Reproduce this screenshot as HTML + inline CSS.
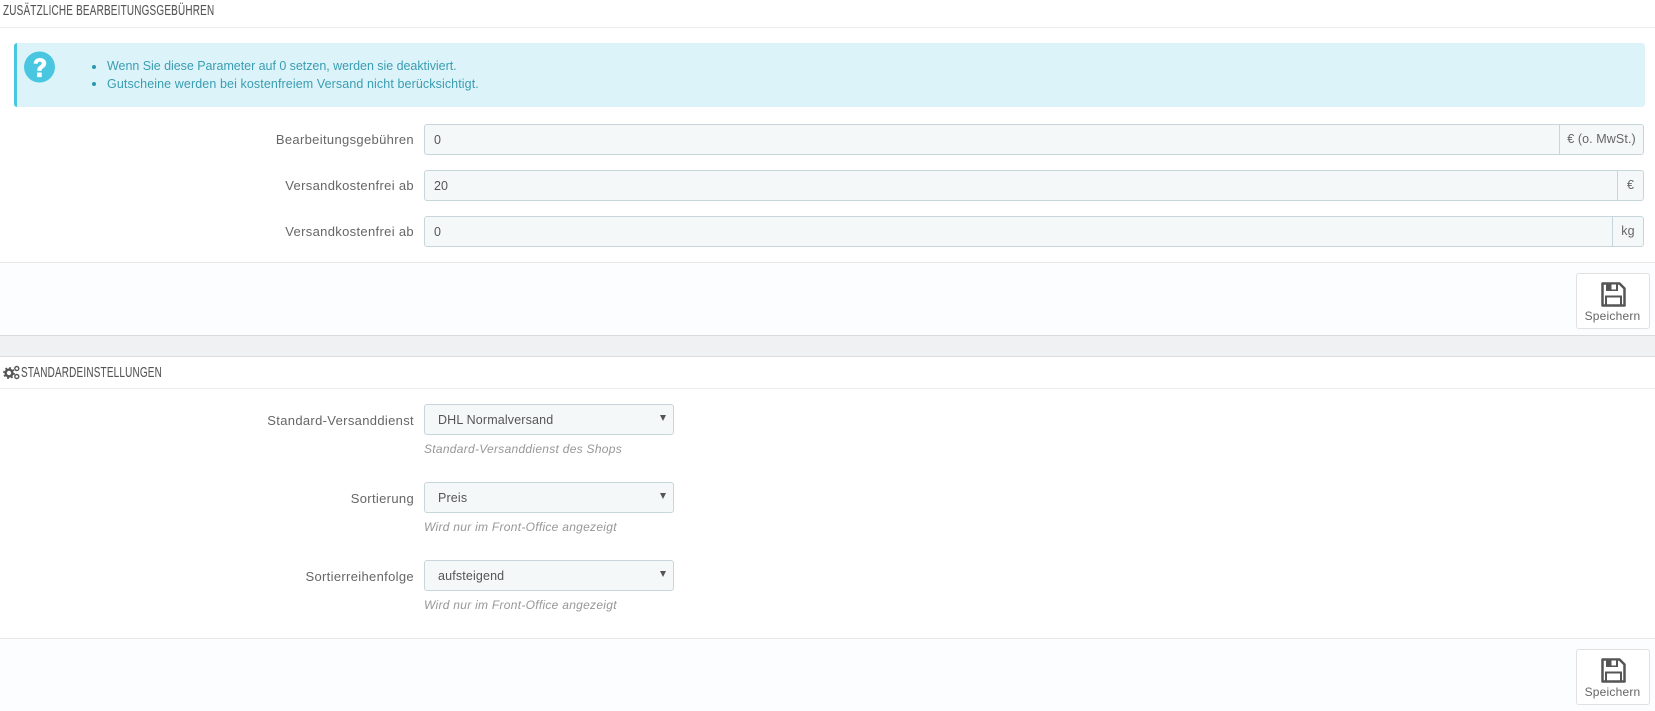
<!DOCTYPE html>
<html lang="de"><head><meta charset="utf-8"><title>Versand</title>
<style>
html,body{margin:0;padding:0;background:#fff}
body{position:relative;width:1655px;height:711px;overflow:hidden;font-family:"Liberation Sans",sans-serif;font-size:12.5px;color:#666}
div,span,svg,ul,li{position:absolute;box-sizing:border-box;white-space:nowrap}
.h{font-size:14.5px;color:#555;transform-origin:0 0;transform:scaleX(.685);letter-spacing:.3px;-webkit-text-stroke:.1px #555}
.line{left:0;width:1655px;height:1px;background:#eaedef}
.foot{left:0;width:1655px;background:#fcfdfe;border-top:1px solid #e6e8ea}
.lab{right:1241px;font-size:13px;color:#666;letter-spacing:.33px;text-align:right}
.inp{left:424px;width:1220px;height:31px;background:#f5f8f9;border:1px solid #c7d6db;border-radius:3px;color:#555}
.inp b{position:absolute;left:9px;top:8px;font-weight:400;font-size:12.5px}
.add{top:0;right:0;height:29px;border-left:1px solid #c7d6db;font-size:12.5px;letter-spacing:.1px;color:#666;line-height:29px;text-align:center}
.sel{left:424px;width:250px;height:31px;background:#f5f8f9;border:1px solid #c7d6db;border-radius:3px}
.sel b{position:absolute;left:13px;top:8px;font-weight:400;font-size:12.5px;color:#555;letter-spacing:.15px}
.sel i{position:absolute;left:235px;top:10px;width:0;height:0;border-left:3.500px solid transparent;border-right:3.500px solid transparent;border-top:6px solid #555}
.help{left:424px;font-style:italic;font-size:12px;color:#979797;letter-spacing:.28px}
.btn{left:1576px;width:74px;height:56px;background:#fff;border:1px solid #dfe1e3;border-radius:3px}
.btn svg{left:24px;top:8px}
.btn span{left:0;width:71px;top:35px;text-align:center;font-size:12px;color:#666;letter-spacing:.2px}
</style></head><body>
<div class="h" style="left:3px;top:3px">ZUSÄTZLICHE BEARBEITUNGSGEBÜHREN</div>
<div class="line" style="top:27px"></div>
<div style="left:14px;top:43px;width:1631px;height:64px;background:#dcf4f9;border-left:3px solid #4ac7e0;border-radius:3px"></div>
<svg style="left:24px;top:51px" width="32" height="32" viewBox="0 0 32 32"><circle cx="15.5" cy="16" r="15.5" fill="#4ac7e0"/><g transform="translate(15.500 16.500) scale(1.2) translate(-15.400 -15.800)"><path d="M10.500 12.500c.3-3 2.500-4.600 5.200-4.600 3 0 5.300 1.800 5.300 4.400 0 2.200-1.300 3.200-2.600 4.100-1 .7-1.300 1.100-1.300 2.200h-3.600c0-2.200.6-3.200 2-4.200 1-.7 1.800-1.200 1.800-2.100 0-.8-.7-1.400-1.600-1.400-1 0-1.700.6-2 1.900z" fill="#fff"/><rect x="13.400" y="20" width="3.900" height="3.800" rx=".4" fill="#fff"/></g></svg>
<span style="left:92px;top:65px;width:4px;height:4px;border-radius:50%;background:#2a97ad"></span>
<span style="left:92px;top:82px;width:4px;height:4px;border-radius:50%;background:#2a97ad"></span>
<span style="left:107px;top:59px;font-size:12.5px;color:#3a9db2;letter-spacing:-.04px">Wenn Sie diese Parameter auf 0 setzen, werden sie deaktiviert.</span>
<span style="left:107px;top:77px;font-size:12.5px;color:#3a9db2;letter-spacing:.1px">Gutscheine werden bei kostenfreiem Versand nicht berücksichtigt.</span>

<span class="lab" style="top:132px">Bearbeitungsgebühren</span>
<div class="inp" style="top:124px"><b>0</b><span class="add" style="width:84px">€ (o. MwSt.)</span></div>
<span class="lab" style="top:178px">Versandkostenfrei ab</span>
<div class="inp" style="top:170px"><b>20</b><span class="add" style="width:26px">€</span></div>
<span class="lab" style="top:224px">Versandkostenfrei ab</span>
<div class="inp" style="top:216px"><b>0</b><span class="add" style="width:31px">kg</span></div>

<div class="foot" style="top:262px;height:73px"></div>
<div class="btn" style="top:273px"><svg width="25" height="25" viewBox="0 0 25 25"><path d="M1.500 1.500H18.500L23.500 6.500V23.500H1.500Z" fill="none" stroke="#555" stroke-width="2.500" stroke-linejoin="round"/><path d="M5 1H17V9H5Z" fill="#555"/><rect x="10.500" y="2.500" width="4.500" height="5" fill="#fff"/><path d="M5 23V14.500H20V23" fill="none" stroke="#555" stroke-width="2"/></svg><span>Speichern</span></div>

<div style="left:0;top:335px;width:1655px;height:22px;background:#eff1f2;border-top:1px solid #d9dbdd;border-bottom:1px solid #dcdee0"></div>

<svg style="left:3px;top:365px" width="17" height="15" viewBox="0 0 17 15"><circle cx="6" cy="8" r="3.400" fill="none" stroke="#555" stroke-width="2.400"/><circle cx="6" cy="8" r="5.100" fill="none" stroke="#555" stroke-width="1.600" stroke-dasharray="1.900 2.100"/><circle cx="13.800" cy="3.500" r="2" fill="none" stroke="#555" stroke-width="1.400"/><circle cx="13.800" cy="11.500" r="2" fill="none" stroke="#555" stroke-width="1.400"/></svg>
<div class="h" style="left:21px;top:365px">STANDARDEINSTELLUNGEN</div>
<div class="line" style="top:388px"></div>

<span class="lab" style="top:413px">Standard-Versanddienst</span>
<div class="sel" style="top:404px"><b>DHL Normalversand</b><i></i></div>
<span class="help" style="top:442px">Standard-Versanddienst des Shops</span>

<span class="lab" style="top:491px">Sortierung</span>
<div class="sel" style="top:482px"><b>Preis</b><i></i></div>
<span class="help" style="top:520px">Wird nur im Front-Office angezeigt</span>

<span class="lab" style="top:569px">Sortierreihenfolge</span>
<div class="sel" style="top:560px"><b>aufsteigend</b><i></i></div>
<span class="help" style="top:598px">Wird nur im Front-Office angezeigt</span>

<div class="foot" style="top:638px;height:73px"></div>
<div class="btn" style="top:649px"><svg width="25" height="25" viewBox="0 0 25 25"><path d="M1.500 1.500H18.500L23.500 6.500V23.500H1.500Z" fill="none" stroke="#555" stroke-width="2.500" stroke-linejoin="round"/><path d="M5 1H17V9H5Z" fill="#555"/><rect x="10.500" y="2.500" width="4.500" height="5" fill="#fff"/><path d="M5 23V14.500H20V23" fill="none" stroke="#555" stroke-width="2"/></svg><span>Speichern</span></div>
</body></html>
